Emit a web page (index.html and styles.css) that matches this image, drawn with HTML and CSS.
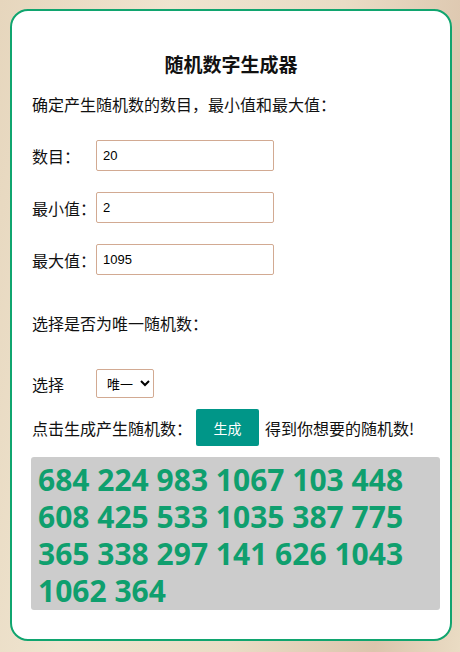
FILE: index.html
```html
<!DOCTYPE html>
<html lang="zh">
<head>
    <meta charset="UTF-8">
    <title>随机数字生成器</title>
    <link rel="stylesheet" href="styles.css">
</head>
<body>
    <div class="card">
        <h2 class="title">随机数字生成器</h2>
        <p class="intro">确定产生随机数的数目，最小值和最大值：</p>
        <div class="field">
            <label for="count">数目：</label>
            <input type="text" id="count" value="20">
        </div>
        <div class="field">
            <label for="min">最小值：</label>
            <input type="text" id="min" value="2">
        </div>
        <div class="field">
            <label for="max">最大值：</label>
            <input type="text" id="max" value="1095">
        </div>
        <p class="unique-text">选择是否为唯一随机数：</p>
        <div class="field select-row">
            <label for="unique">选择</label>
            <select id="unique">
                <option>唯一</option>
                <option>可重复</option>
            </select>
        </div>
        <div class="gen-row">
            <span>点击生成产生随机数：</span>
            <button class="gen-btn">生成</button>
            <span>得到你想要的随机数!</span>
        </div>
        <div class="result">684 224 983 1067 103 448 608 425 533 1035 387 775 365 338 297 141 626 1043 1062 364</div>
    </div>
</body>
</html>
```

FILE: styles.css
```css
body {
    margin: 0;
    padding: 9px 8px 11px 10px;
    font-family: "Noto Sans CJK SC", "Noto Sans", sans-serif;
    background: linear-gradient(100deg, #e6d6bd 0%, #efe4cf 30%, #e9dcc5 60%, #dcc5ad 85%, #eadcc4 100%);
    min-height: 632px;
}
.card {
    background: #fff;
    border: 2px solid #10a56f;
    border-radius: 18px;
    height: 632px;
    box-sizing: border-box;
    padding: 0 10px 0 20px;
    color: #111;
    font-size: 16px;
}
.title {
    margin: 40px -10px 0 -20px;
    text-align: center;
    font-size: 19px;
    font-weight: bold;
    line-height: 26px;
}
.intro {
    margin: 16px 0 0;
    line-height: 22px;
}
.field {
    display: flex;
    align-items: center;
    margin-top: 21px;
}
.intro + .field {
    margin-top: 25px;
}
.field label {
    width: 64px;
    flex-shrink: 0;
}
.field input {
    width: 178px;
    height: 31px;
    box-sizing: border-box;
    border: 1px solid #d2aa92;
    border-radius: 2px;
    padding: 0 6px;
    font-family: "Liberation Sans", Arial, sans-serif;
    font-size: 13px;
    color: #000;
}
.unique-text {
    margin: 37px 0 0;
    line-height: 22px;
}
.select-row {
    margin-top: 35px;
}
.select-row select {
    width: 58px;
    height: 29px;
    border: 1px solid #d2aa92;
    border-radius: 2px;
    background: #fff;
    font-family: "Noto Sans CJK SC", sans-serif;
    font-size: 13px;
    padding: 0 2px 0 6px;
    color: #000;
}
.gen-row {
    display: flex;
    align-items: center;
    margin-top: 11px;
}
.gen-btn {
    width: 63px;
    height: 37px;
    margin: 0 6px 0 4px;
    border: none;
    border-radius: 2px;
    background: #009688;
    color: #fff;
    font-family: "Noto Sans CJK SC", sans-serif;
    font-size: 14px;
}
.result {
    margin: 11px 0 0 -1px;
    width: 409px;
    box-sizing: border-box;
    background: #cccccc;
    border-radius: 3px;
    padding: 4px 6px 1px 7px;
    color: #0f9f6e;
    font-family: "Noto Sans", sans-serif;
    font-weight: bold;
    font-size: 30px;
    line-height: 37px;
}
```
